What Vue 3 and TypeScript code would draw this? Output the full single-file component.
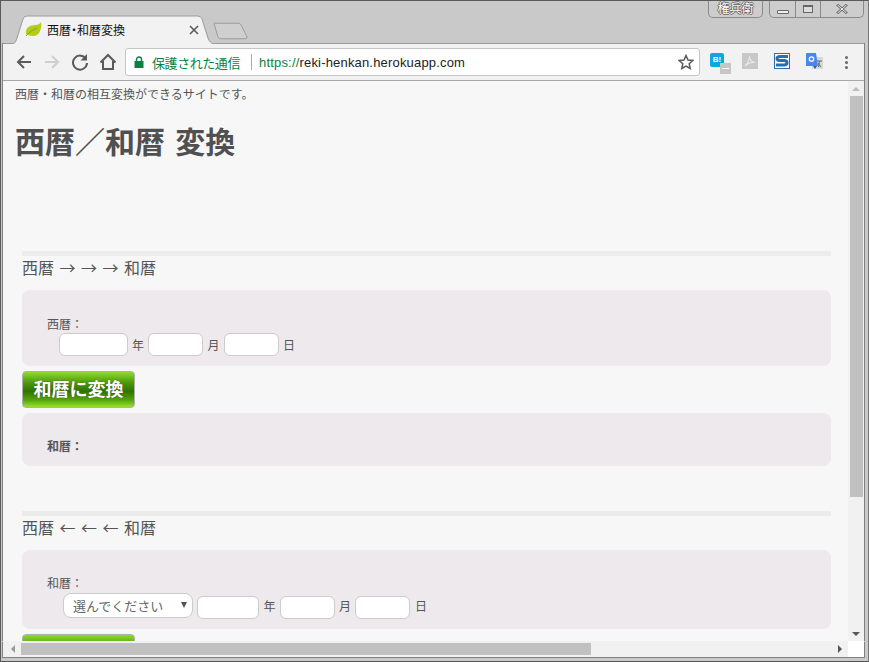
<script setup lang="ts">
const targets = [
  { id: 'y', label: '年', width: 69, unit: 20 },
  { id: 'm', label: '月', width: 55, unit: 21 },
  { id: 'd', label: '日', width: 55, unit: 20 },
]
const targetsJp = [
  { id: 'jy', label: '年', width: 62, unit: 21 },
  { id: 'jm', label: '月', width: 55, unit: 20 },
  { id: 'jd', label: '日', width: 55, unit: 22 },
]
</script>

<template>
  <div class="window">
    <div class="titlebar">
      <div class="tab">
        <svg class="tab-shape" width="205" height="29" viewBox="0 0 205 29">
          <path d="M0.5 29 C4 29 5 26 6 23 L12 4 C13 2 14 1 17 1 L186 1 C189 1 190 2 191 4 L197 23 C198 26 200 29 204.5 29" fill="#f2f2f2" stroke="#9a9a9a" />
        </svg>
        <svg class="favicon" width="17" height="16" viewBox="0 0 17 16">
          <path d="M1 12 C0 6 5 3 10 3 C13 3 15 2 16 0 C17 6 15 14 8 14 C5 14 3 13 1 12 Z" fill="#b5cc18" />
          <path d="M1 14 C4 10 8 8 12 6" stroke="#8aa512" fill="none" />
        </svg>
        <span class="tab-title">西暦・和暦変換</span>
        <svg class="tab-close" width="10" height="10" viewBox="0 0 10 10">
          <path d="M1 1 L9 9 M9 1 L1 9" stroke="#5a5a5a" stroke-width="1.6" />
        </svg>
      </div>
      <svg class="new-tab" width="35" height="18" viewBox="0 0 36 18">
        <path d="M1 1 H26 Q28 1 29 3 L35 15 Q35 17 33 17 H8 Q6 17 5 15 Z" fill="#cfcfcf" stroke="#9a9a9a" />
      </svg>
      <div class="user-badge">権兵衛</div>
      <div class="win-controls">
        <span class="win-btn min"><i></i></span>
        <span class="win-btn max"><i></i></span>
        <span class="win-btn close">
          <svg width="12" height="10" viewBox="0 0 12 10">
            <path d="M1 0.5 L11 9.5 M11 0.5 L1 9.5" stroke="#666" stroke-width="2.4" />
            <path d="M1.5 1 L10.5 9 M10.5 1 L1.5 9" stroke="#f2f2f2" stroke-width="1" />
          </svg>
        </span>
      </div>
    </div>

    <div class="toolbar">
      <svg class="nav" width="18" height="18" viewBox="0 0 18 18">
        <path d="M16 9 H3 M9 3 L3 9 L9 15" fill="none" stroke="#5a5a5a" stroke-width="2" />
      </svg>
      <svg class="nav" width="18" height="18" viewBox="0 0 18 18">
        <path d="M2 9 H15 M9 3 L15 9 L9 15" fill="none" stroke="#cfcfcf" stroke-width="2" />
      </svg>
      <svg class="nav" width="18" height="18" viewBox="0 0 18 18">
        <path d="M15 6 A7 7 0 1 0 16 10" fill="none" stroke="#5a5a5a" stroke-width="2" />
        <path d="M16 1 V7.5 H9.5 Z" fill="#5a5a5a" />
      </svg>
      <svg class="nav" width="18" height="18" viewBox="0 0 18 18">
        <path d="M1.5 9.5 L9 2 L16.5 9.5 M4 8 V16 H14 V8" fill="none" stroke="#5a5a5a" stroke-width="2" />
      </svg>
      <div class="omnibox">
        <svg class="lock" width="10" height="12" viewBox="0 0 10 12">
          <path d="M2.5 5 V3.5 A2.5 2.5 0 0 1 7.5 3.5 V5" fill="none" stroke="#0b8043" stroke-width="1.4" />
          <rect x="0.5" y="5" width="9" height="7" fill="#0b8043" />
        </svg>
        <span class="secure">保護された通信</span>
        <span class="sep"></span>
        <span class="url"><span class="scheme">https://</span>reki-henkan.herokuapp.com</span>
        <svg class="star" width="16" height="16" viewBox="0 0 16 16">
          <path d="M8 1.5 L10 6 L14.8 6.5 L11.2 9.7 L12.2 14.5 L8 12 L3.8 14.5 L4.8 9.7 L1.2 6.5 L6 6 Z" fill="none" stroke="#5a5a5a" stroke-width="1.5" />
        </svg>
      </div>
      <div class="ext bl">
        <span class="bl-box">B!</span>
        <span class="bl-minus"></span>
      </div>
      <svg class="ext pdf" width="16" height="16" viewBox="0 0 16 16">
        <rect width="16" height="16" fill="#c8c8c8" />
        <path d="M3 13 C6 10 8 5 7.5 3 C7 5 9 9 13 9.5 C10 9 6 10 3 13 Z" fill="none" stroke="#e8e8e8" stroke-width="1.2" />
      </svg>
      <svg class="ext sbox" width="16" height="16" viewBox="0 0 16 16">
        <rect x="0.5" y="0.5" width="15" height="15" fill="#fff" stroke="#2a6eb0" />
        <path d="M14 3.5 H6 C2 3.5 2 7.5 6 7.5 H10 C14 7.5 14 12 10 12 H2" fill="none" stroke="#2a6eb0" stroke-width="3" />
      </svg>
      <svg class="ext gt" width="17" height="17" viewBox="0 0 17 17">
        <rect x="6" y="4" width="11" height="12" fill="#d8d8d8" />
        <path d="M0 1 Q0 0 1 0 H10 L12 13 H0 Z" fill="#4a86e8" />
        <path d="M7 13 L9 16 L11 13 Z" fill="#2a5fc0" />
        <circle cx="5.5" cy="6" r="2.2" fill="none" stroke="#fff" stroke-width="1.3" />
        <path d="M11 8 H16 M13.5 8 L12.5 14 M12 10 L15 14" stroke="#666" fill="none" />
      </svg>
      <div class="menu-dots"><i></i><i></i><i></i></div>
    </div>

    <div class="content-row">
      <div class="viewport">
        <p class="desc">西暦・和暦の相互変換ができるサイトです。</p>
        <h1>西暦／和暦 変換</h1>

        <section class="conv first">
          <h2>西暦 → → → 和暦</h2>
          <form class="panel panel-input" @submit.prevent>
            <label class="field-label">西暦：</label>
            <div class="fields seireki">
              <template v-for="t in targets" :key="t.id">
                <input class="num" type="text" :style="{ width: t.width + 'px' }" />
                <span class="unit" :style="{ width: t.unit + 'px' }">{{ t.label }}</span>
              </template>
            </div>
          </form>
          <button class="convert" type="button">和暦に変換</button>
          <div class="panel panel-result">
            <strong class="field-label">和暦：</strong>
          </div>
        </section>

        <section class="conv second">
          <h2>西暦 ← ← ← 和暦</h2>
          <form class="panel panel-input panel-jp" @submit.prevent>
            <label class="field-label">和暦：</label>
            <div class="fields wareki">
              <div class="select">選んでください<i class="caret"></i></div>
              <template v-for="t in targetsJp" :key="t.id">
                <input class="num low" type="text" :style="{ width: t.width + 'px' }" />
                <span class="unit low" :style="{ width: t.unit + 'px' }">{{ t.label }}</span>
              </template>
            </div>
          </form>
          <!-- 下半分はスクロールの外 -->
          <button class="convert" type="button" aria-label="西暦に変換"></button>
        </section>
      </div>

      <div class="vscroll">
        <i class="arrow up"></i>
        <div class="vthumb"></div>
        <i class="arrow down"></i>
      </div>
    </div>

    <div class="hscroll">
      <i class="arrow left"></i>
      <div class="hthumb"></div>
      <i class="arrow right"></i>
      <div class="corner"></div>
    </div>
  </div>
</template>

<style scoped>
.window {
  box-sizing: border-box;
  width: 869px;
  height: 662px;
  padding: 0 4px 4px 2px;
  background: #c9c9c9;
  border-top: 1px solid #5a5a5a;
  border-left: 1px solid #5a5a5a;
  border-right: 1px solid #777;
  border-bottom: 1px solid #555;
  display: flex;
  flex-direction: column;
  overflow: hidden;
  font-family: "Liberation Sans", "Noto Sans CJK JP", sans-serif;
  color: #555;
}

/* title bar */
.titlebar {
  height: 42px;
  display: flex;
  flex-shrink: 0;
  align-items: flex-end;
  margin-left: -2px;
}
.tab {
  position: relative;
  width: 205px;
  height: 29px;
  margin-left: 10px;
  margin-bottom: -1px;
  display: flex;
  align-items: center;
  z-index: 1;
}
.tab-shape {
  position: absolute;
  left: 0;
  top: 0;
}
.favicon {
  position: relative;
  margin-left: 14px;
}
.tab-title {
  position: relative;
  margin-left: 5px;
  font-size: 12px;
  font-feature-settings: "palt";
  color: #111;
}
.tab-close {
  position: absolute;
  left: 178px;
  top: 10px;
}
.new-tab {
  margin-left: -3px;
  margin-bottom: 3px;
}
.user-badge {
  align-self: flex-start;
  margin-left: auto;
  box-sizing: border-box;
  width: 55px;
  height: 17px;
  line-height: 16px;
  text-align: center;
  font-size: 12px;
  color: #fff;
  text-shadow: 1px 0 0 #666, -1px 0 0 #666, 0 1px 0 #666, 0 -1px 0 #666;
  background: #cdcdcd;
  border: 1px solid #8a8a8a;
  border-top: none;
  border-radius: 0 0 5px 5px;
}
.win-controls {
  align-self: flex-start;
  display: flex;
  margin-left: 6px;
  height: 17px;
  box-sizing: border-box;
  background: #cdcdcd;
  border: 1px solid #8a8a8a;
  border-top: none;
  border-radius: 0 0 5px 5px;
}
.win-btn {
  display: flex;
  align-items: center;
  justify-content: center;
  border-right: 1px solid #8a8a8a;
}
.win-btn.min { width: 25px; }
.win-btn.max { width: 24px; }
.win-btn.close { width: 42px; border-right: none; }
.win-btn.min i {
  width: 10px;
  height: 2px;
  margin-top: 5px;
  border: 1px solid #666;
  background: #eee;
  border-radius: 1px;
}
.win-btn.max i {
  width: 8px;
  height: 5px;
  border: 1px solid #666;
  border-top-width: 2px;
  background: #ddd;
}

/* toolbar */
.toolbar {
  height: 38px;
  flex-shrink: 0;
  box-sizing: border-box;
  background: #f2f2f2;
  border-top: 1px solid #9a9a9a;
  border-bottom: 1px solid #a8a8a8;
  display: flex;
  align-items: center;
  padding-left: 12px;
  box-shadow: -1px 0 0 #808080, 1px 0 0 #808080;
}
.nav {
  margin-right: 10px;
  flex-shrink: 0;
}
.omnibox {
  box-sizing: border-box;
  width: 575px;
  height: 28px;
  margin-left: -2px;
  background: #fff;
  border: 1px solid #c4c4c4;
  border-radius: 3px;
  display: flex;
  align-items: center;
  padding-left: 8px;
}
.lock {
  flex-shrink: 0;
}
.secure {
  margin-left: 8px;
  font-size: 13px;
  letter-spacing: -0.43px;
  color: #0b8043;
}
.sep {
  width: 1px;
  height: 16px;
  margin: 0 7px 0 11px;
  background: #aaa;
}
.url {
  font-size: 13px;
  letter-spacing: 0.18px;
  color: #222;
  white-space: nowrap;
}
.scheme {
  color: #0b8043;
}
.star {
  margin-left: auto;
  margin-right: 5px;
}
.ext {
  flex-shrink: 0;
}
.bl {
  position: relative;
  width: 16px;
  height: 16px;
  margin-left: 10px;
  margin-top: -3px;
}
.bl-box {
  display: block;
  width: 14px;
  height: 14px;
  background: #0ea5e0;
  border-radius: 2px;
  color: #fff;
  font-size: 8px;
  font-weight: bold;
  line-height: 13px;
  text-align: center;
}
.bl-minus {
  position: absolute;
  left: 10px;
  top: 10px;
  width: 11px;
  height: 11px;
  background: #c6c6c6;
}
.bl-minus::after {
  content: "";
  position: absolute;
  left: 2px;
  top: 5px;
  width: 7px;
  height: 1px;
  background: #fff;
}
.pdf {
  margin-left: 16px;
  margin-top: -2px;
}
.sbox {
  margin-left: 16px;
  margin-top: -2px;
}
.gt {
  margin-left: 16px;
  margin-top: -1px;
}
.menu-dots {
  display: flex;
  flex-direction: column;
  gap: 2px;
  margin-left: 22px;
}
.menu-dots i {
  width: 3px;
  height: 3px;
  background: #666;
  border-radius: 50%;
}

/* page */
.content-row {
  flex: 1;
  min-height: 0;
  display: flex;
  box-shadow: -1px 0 0 #808080, 1px 0 0 #808080;
}
.viewport {
  width: 845px;
  flex-shrink: 0;
  background: #f7f7f7;
  overflow: hidden;
  box-sizing: border-box;
  padding: 0 17px 0 12px;
  font-size: 12px;
}
.desc {
  margin: 7px 0 0;
  font-size: 12px;
  line-height: 14px;
}
h1 {
  margin: 23px 0 0;
  font-size: 30px;
  line-height: 36px;
  word-spacing: 2px;
  font-weight: bold;
  color: #505050;
}
.conv {
  margin-left: 7px;
  border-top: 5px solid #ececec;
}
.conv.first {
  margin-top: 90px;
}
.conv.second {
  margin-top: 45px;
}
h2 {
  margin: 2px 0 13px;
  font-family: "Noto Sans CJK JP", sans-serif;
  font-size: 16px;
  line-height: 19px;
  word-spacing: 1.9px;
  font-weight: normal;
  color: #555;
}
.panel {
  background: #ede9ed;
  border-radius: 8px;
  box-sizing: border-box;
}
.panel-input {
  height: 76px;
  padding: 27px 0 0 25px;
}
.panel-jp {
  height: 79px;
  padding-top: 26px;
}
.field-label {
  display: block;
  font-size: 12px;
  line-height: 16px;
  color: #555;
}
.fields {
  display: flex;
  align-items: center;
  height: 24px;
  margin-top: -1px;
}
.fields.seireki {
  margin-left: 12px;
}
.fields.wareki {
  margin-left: 16px;
  margin-top: 1px;
  align-items: flex-start;
}
.num {
  box-sizing: border-box;
  height: 23px;
  padding: 0 6px;
  background: #fff;
  border: 1px solid #ccc;
  border-radius: 6px;
  outline: none;
}
.num.low {
  margin-top: 3px;
}
.unit {
  text-align: center;
  font-size: 12px;
  color: #555;
  flex-shrink: 0;
}
.unit.low {
  line-height: 28px;
}
.select {
  position: relative;
  box-sizing: border-box;
  width: 130px;
  height: 25px;
  margin-right: 4px;
  padding-left: 9px;
  line-height: 25px;
  font-size: 13px;
  color: #666;
  background: #fff;
  border: 1px solid #ccc;
  border-radius: 8px;
}
.caret {
  position: absolute;
  right: 5px;
  top: 8px;
  border-left: 3px solid transparent;
  border-right: 3px solid transparent;
  border-top: 6px solid #555;
}
.convert {
  display: block;
  box-sizing: border-box;
  width: 113px;
  height: 37px;
  margin-top: 5px;
  padding: 0 0 3px;
  border: 1px solid #b0b0b0;
  border-radius: 4px;
  background: linear-gradient(#8fdc2c 0%, #4c9a0c 30%, #2f7300 55%, #55a30c 80%, #96e232 100%);
  color: #fff;
  font-family: inherit;
  font-size: 18px;
  font-weight: bold;
  text-shadow: 0 0 1px #444;
}
.panel-result {
  height: 53px;
  margin-top: 5px;
  padding: 26px 0 0 25px;
}

/* scrollbars */
.vscroll {
  position: relative;
  width: 16px;
  flex-shrink: 0;
  background: #f1f1f1;
  display: flex;
  flex-direction: column;
  align-items: center;
}
.vthumb {
  width: 13px;
  height: 401px;
  margin-top: 5px;
  margin-left: 1px;
  background: #c0c0c0;
}
.arrow {
  width: 0;
  height: 0;
  flex-shrink: 0;
}
.arrow.up {
  margin-top: 6px;
  border-left: 4px solid transparent;
  border-right: 4px solid transparent;
  border-bottom: 4px solid #bbb;
}
.arrow.down {
  margin-top: auto;
  margin-bottom: 5px;
  border-left: 4px solid transparent;
  border-right: 4px solid transparent;
  border-top: 4px solid #555;
}
.hscroll {
  height: 16px;
  flex-shrink: 0;
  background: #f1f1f1;
  display: flex;
  align-items: center;
  box-shadow: -1px 1px 0 #808080, 1px 1px 0 #808080;
}
.arrow.left {
  margin-left: 8px;
  border-top: 4px solid transparent;
  border-bottom: 4px solid transparent;
  border-right: 4px solid #999;
}
.hthumb {
  width: 570px;
  height: 12px;
  margin-left: 6px;
  background: #c0c0c0;
}
.arrow.right {
  margin-left: auto;
  margin-right: 6px;
  border-top: 4px solid transparent;
  border-bottom: 4px solid transparent;
  border-left: 4px solid #555;
}
.corner {
  width: 16px;
  height: 16px;
  background: #fff;
}
</style>

<style>
html, body {
  margin: 0;
  background: #c9c9c9;
}
</style>
